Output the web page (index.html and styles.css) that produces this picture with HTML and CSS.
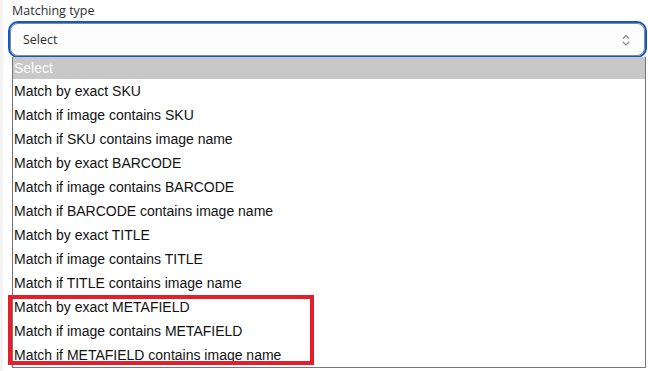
FILE: index.html
```html
<!DOCTYPE html>
<html>
<head>
<meta charset="utf-8">
<link rel="stylesheet" href="styles.css">
</head>
<body>
<div class="edge"></div>
<div class="field">
  <div class="label">Matching type</div>
  <div class="select">
    <span class="value">Select</span>
    <svg class="chev" width="10" height="16" viewBox="0 0 10 16"><path d="M2 6.5 L5 3.5 L8 6.5 M2 10 L5 13 L8 10" fill="none" stroke="#8a8a8a" stroke-width="1.2"/></svg>
  </div>
</div>
<ul class="list">
  <li class="sel">Select</li>
  <li>Match by exact SKU</li>
  <li>Match if image contains SKU</li>
  <li>Match if SKU contains image name</li>
  <li>Match by exact BARCODE</li>
  <li>Match if image contains BARCODE</li>
  <li>Match if BARCODE contains image name</li>
  <li>Match by exact TITLE</li>
  <li>Match if image contains TITLE</li>
  <li>Match if TITLE contains image name</li>
  <li>Match by exact METAFIELD</li>
  <li>Match if image contains METAFIELD</li>
  <li>Match if METAFIELD contains image name</li>
</ul>
<div class="highlight"></div>
</body>
</html>
```
FILE: styles.css
```css
html, body { margin: 0; padding: 0; }
body {
  width: 648px;
  height: 371px;
  background: #ffffff;
  position: relative;
  overflow: hidden;
  font-family: "Liberation Sans", Arial, sans-serif;
}
.edge {
  position: absolute;
  left: 0; top: 0;
  width: 3px; height: 371px;
  background: #f3f3f3;
}
.field {
  padding: 3px 3px 0 10px;
}
.label {
  font-family: "Open Sans", "Noto Sans", sans-serif;
  font-size: 12.5px;
  color: #303030;
  line-height: 16px;
  padding-left: 2px;
  margin-bottom: 4px;
}
.select {
  height: 33px;
  box-sizing: border-box;
  border: 1px solid #8a8a8a;
  border-radius: 8px;
  outline: 2px solid #0a5bd0;
  outline-offset: 0px;
  background: #fdfdfd;
  display: flex;
  align-items: center;
  justify-content: space-between;
  padding: 0 13px 0 12px;
}
.value {
  font-family: "Open Sans", "Noto Sans", sans-serif;
  font-size: 12.5px;
  color: #303030;
}
.chev { display: block; }
.list {
  position: absolute;
  left: 12px;
  top: 57px;
  width: 632px;
  height: 310px;
  margin: 0;
  padding: 0;
  list-style: none;
  background: #fff;
  border: 1px solid #767676;
  border-top: none;
}
.list li {
  height: 24px;
  line-height: 25px;
  font-size: 14px;
  color: #111;
  padding-left: 1px;
}
.list li.sel {
  height: 22px;
  line-height: 22px;
  background: #c8c8c8;
  color: #fff;
}
.highlight {
  position: absolute;
  left: 8px;
  top: 295px;
  width: 298px;
  height: 62px;
  border: 4px solid #e41f2b;
}
```
